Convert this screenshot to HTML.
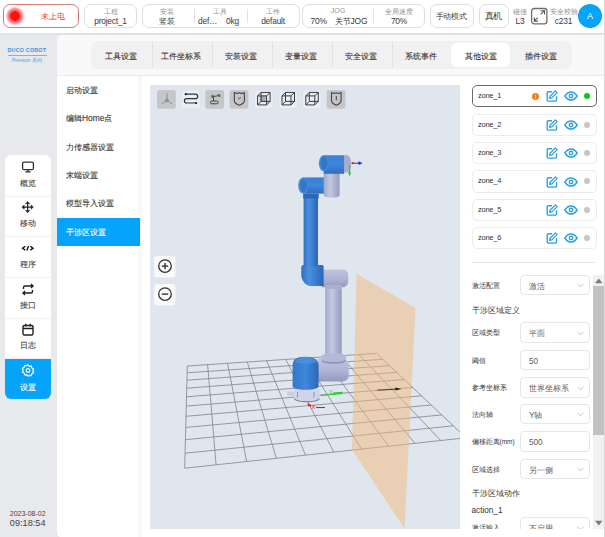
<!DOCTYPE html>
<html><head><meta charset="utf-8">
<style>
*{box-sizing:border-box;margin:0;padding:0}
html,body{width:605px;height:537px;overflow:hidden}
body{position:relative;background:#e8e9ec;font-family:"Liberation Sans",sans-serif;color:#333}
.a{position:absolute;white-space:nowrap}
.box{position:absolute;border:1px solid #dedede;border-radius:7px;background:#fff}
.lbl{position:absolute;font-size:7px;color:#939393;line-height:8px;white-space:nowrap;text-align:center}
.val{position:absolute;font-size:8.4px;letter-spacing:-.2px;color:#3a3a3a;line-height:9.5px;white-space:nowrap;text-align:center}
.sep{position:absolute;width:1px;background:#e2e2e2}
.ni{position:absolute;left:0;width:46px;height:40.7px;text-align:center}
.ni .ic{position:absolute;left:16px;top:5.5px}
.ni span{position:absolute;left:0;width:46px;top:23.7px;font-size:8.2px;line-height:10px;color:#444}
.ni.sel{background:#06a3fa}
.ni.sel span{color:#fff}
.nsep{position:absolute;left:0;width:46px;height:1px;background:#f0f0f0}
.tab{top:41px;width:60px;height:28px;line-height:30px;text-align:center;font-size:8.4px;color:#333}
.mi{left:66px;height:28px;line-height:29px;font-size:8.4px;color:#333}
.zt{left:16px;height:22.3px;line-height:22.4px;font-size:7.5px;letter-spacing:-.25px;color:#333}
.fl{left:9.5px;height:20.7px;line-height:22.5px;font-size:7.2px;color:#333}
.fh{left:9.5px;height:12px;line-height:12px;font-size:8.1px;color:#333}
.fv{left:67px;height:20.7px;line-height:23.5px;font-size:8.2px;color:#5c5c5c}

.tab,.mi,.ni span{-webkit-text-stroke:.1px currentColor}
</style></head><body>
<div class="a" style="left:0;top:0;width:605px;height:33px;background:#fff"></div>
<div class="a" style="left:0;top:33px;width:605px;height:3px;background:linear-gradient(#dddee2,#e8e9ec)"></div>
<div class="box" style="left:3px;top:4px;width:76px;height:24px;border-color:#d27a7a"></div>
<div class="a" style="left:4.3px;top:4.5px;width:22px;height:22px;border-radius:50%;background:radial-gradient(circle 11px at 50% 50%,#ff1212 0,#ff1212 40%,rgba(255,50,50,.85) 46%,rgba(255,85,85,.72) 62%,rgba(255,95,95,.6) 70%,rgba(255,140,140,.2) 80%,rgba(255,170,170,0) 95%)"></div>
<div class="a" style="left:41px;top:12px;font-size:8.2px;line-height:10px;color:#e03c3c">未上电</div>
<div class="box" style="left:84px;top:4px;width:53px;height:24px"></div>
<div class="lbl" style="left:84px;width:53px;top:7.5px">工程</div>
<div class="val" style="left:84px;width:53px;top:16.5px">project_1</div>
<div class="box" style="left:142px;top:4px;width:158px;height:24px"></div>
<div class="lbl" style="left:146px;width:42px;top:7.5px">安装</div>
<div class="val" style="left:146px;width:42px;top:16.5px">竖装</div>
<div class="sep" style="left:194px;top:9px;height:14px"></div>
<div class="lbl" style="left:199px;width:42px;top:7.5px">工具</div>
<div class="val" style="left:198px;top:16.5px;text-align:left">def…</div>
<div class="val" style="left:226px;top:16.5px;text-align:left">0kg</div>
<div class="sep" style="left:246.5px;top:9px;height:14px"></div>
<div class="lbl" style="left:252px;width:42px;top:7.5px">工件</div>
<div class="val" style="left:252px;width:42px;top:16.5px">default</div>
<div class="box" style="left:302px;top:4px;width:123px;height:24px"></div>
<div class="lbl" style="left:317px;width:42px;top:6.5px">JOG</div>
<div class="val" style="left:310.5px;top:16.5px;text-align:left">70%</div>
<div class="val" style="left:335px;top:16.5px;text-align:left">关节JOG</div>
<div class="sep" style="left:373px;top:9px;height:14px"></div>
<div class="lbl" style="left:378px;width:42px;top:7.5px">全局速度</div>
<div class="val" style="left:378px;width:42px;top:16.5px">70%</div>
<div class="box" style="left:429.5px;top:4px;width:44.5px;height:24px"></div>
<div class="val" style="left:429px;width:44.5px;top:12.2px;font-size:8.2px;line-height:10px">手动模式</div>
<div class="box" style="left:478.5px;top:4px;width:30px;height:24px"></div>
<div class="val" style="left:478.5px;width:30px;top:11.2px;font-size:9.2px;line-height:11px">真机</div>
<div class="lbl" style="left:510px;width:20px;top:7.5px">碰撞</div>
<div class="val" style="left:510px;width:20px;top:16.5px">L3</div>
<svg class="a" style="left:530px;top:7px" width="19" height="19" viewBox="0 0 19 19"><rect x="1.6" y="1.5" width="15.3" height="15.4" rx="2.6" fill="none" stroke="#6e6e6e" stroke-width="1.3"/><path d="M10.6 7.4L14.3 3.8M10.7 3.7h3.8v3.9M7.6 10.6L4.4 13.9M4.3 10.5v3.6H8" fill="none" stroke="#555" stroke-width="1.1"/></svg>
<div class="lbl" style="left:549.5px;top:7.5px;text-align:left">安全校验</div>
<div class="val" style="left:549.5px;width:28px;top:16.5px">c231</div>
<div class="a" style="left:578px;top:4px;width:24px;height:24px;border-radius:50%;background:#06a3fa;color:#fff;font-size:9px;line-height:24px;text-align:center">A</div>
<div class="a" style="left:7.5px;top:47.3px;font-size:5.3px;font-weight:bold;color:#3a93da;letter-spacing:.25px;line-height:6px">DUCO COBOT</div>
<div class="a" style="left:8px;top:55.3px;width:39px;height:1px;background:#7ab5e6"></div>
<div class="a" style="left:12px;top:57.8px;font-size:4.6px;color:#4a9de0;line-height:5px">Premium 系列</div>
<div class="a" style="left:5px;top:155px;width:46px;height:244px;background:#fff;border-radius:6px;overflow:hidden">
<div class="ni" style="top:0.0px"><svg class="ic" width="14" height="13" viewBox="0 0 14 13"><rect x="1.6" y="1.1" width="10.8" height="7.6" rx="1.5" fill="none" stroke="#333" stroke-width="1.3"/><path d="M7 8.8v2M4.4 10.9h5.2" stroke="#333" stroke-width="1.3"/></svg><span>概览</span></div>
<div class="nsep" style="top:40.7px"></div>
<div class="ni" style="top:40.7px"><svg class="ic" width="14" height="13" viewBox="0 0 14 13"><path d="M6.65 2V10.2M2.5 6.1H10.8" stroke="#222" stroke-width="1.2"/><path d="M6.65 0.4L4.5 2.8H8.8zM6.65 11.8L4.5 9.4H8.8zM0.9 6.1L3.2 4V8.2zM12.4 6.1L10.1 4V8.2z" fill="#222" stroke="#222" stroke-width=".5" stroke-linejoin="round"/></svg><span>移动</span></div>
<div class="nsep" style="top:81.3px"></div>
<div class="ni" style="top:81.3px"><svg class="ic" width="14" height="13" viewBox="0 0 14 13"><path d="M4.3 4.3L1.6 6.2 4.3 8.1M9.3 4.3L12 6.2 9.3 8.1M7.5 4.1L5.9 8.6" fill="none" stroke="#111" stroke-width="1.4"/></svg><span>程序</span></div>
<div class="nsep" style="top:122.0px"></div>
<div class="ni" style="top:122.0px"><svg class="ic" width="14" height="13" viewBox="0 0 14 13"><path d="M2.5 6V4.5a1.5 1.5 0 0 1 1.5-1.5h8M10 1l2 2-2 2M11.5 7v1.5A1.5 1.5 0 0 1 10 10H2M4 8l-2 2 2 2" fill="none" stroke="#222" stroke-width="1.4"/></svg><span>接口</span></div>
<div class="nsep" style="top:162.7px"></div>
<div class="ni" style="top:162.7px"><svg class="ic" width="14" height="13" viewBox="0 0 14 13"><rect x="2" y="2.5" width="10" height="9.5" rx="1.3" fill="none" stroke="#222" stroke-width="1.4"/><path d="M2 5.5h10M4.8 0.8v2.8M9.2 0.8v2.8" stroke="#222" stroke-width="1.4"/></svg><span>日志</span></div>
<div class="nsep" style="top:203.4px"></div>
<div class="ni sel" style="top:203.9px;height:41px"><svg class="ic" width="14" height="13" viewBox="0 0 14 13"><path d="M7 0.8l1.3 1.5 2-.3.5 1.9 1.8 1-.8 1.9.8 1.9-1.8 1-.5 1.9-2-.3L7 12.2l-1.3-1.5-2 .3-.5-1.9-1.8-1 .8-1.9-.8-1.9 1.8-1 .5-1.9 2 .3z" fill="none" stroke="#fff" stroke-width="1.2" stroke-linejoin="round"/><circle cx="7" cy="6.5" r="1.8" fill="none" stroke="#fff" stroke-width="1.2"/></svg><span>设置</span></div>
</div>
<div class="a" style="left:9.8px;top:510px;font-size:7px;line-height:8px;color:#444">2023-08-02</div>
<div class="a" style="left:9.8px;top:518px;font-size:9.2px;line-height:10px;color:#444">09:18:54</div>
<div class="a" style="left:57px;top:35px;width:548px;height:503px;background:#fff;border-radius:6px 0 0 6px"></div>
<div class="a" style="left:57px;top:35px;width:548px;height:40px;background:#f9f9f9;border-radius:6px 0 0 0"></div>
<div class="a" style="left:91px;top:41px;width:481px;height:28px;background:#f1f1f1;border-radius:7px"></div>
<div class="a tab" style="left:91px">工具设置</div>
<div class="a" style="left:152px;top:42px;width:1px;height:25px;background:#e2e2e2"></div>
<div class="a tab" style="left:151px">工件坐标系</div>
<div class="a" style="left:212px;top:42px;width:1px;height:25px;background:#e2e2e2"></div>
<div class="a tab" style="left:211px">安装设置</div>
<div class="a" style="left:272px;top:42px;width:1px;height:25px;background:#e2e2e2"></div>
<div class="a tab" style="left:271px">变量设置</div>
<div class="a" style="left:332px;top:42px;width:1px;height:25px;background:#e2e2e2"></div>
<div class="a tab" style="left:331px">安全设置</div>
<div class="a" style="left:392px;top:42px;width:1px;height:25px;background:#e2e2e2"></div>
<div class="a tab" style="left:391px">系统事件</div>
<div class="a" style="left:451px;top:43px;width:59px;height:24px;background:#fff;border-radius:6px"></div>
<div class="a tab" style="left:451px">其他设置</div>
<div class="a tab" style="left:511px">插件设置</div>
<div class="a" style="left:57px;top:75px;width:548px;height:1px;background:#ebebeb"></div>
<div class="a" style="left:137px;top:76px;width:6px;height:461px;background:linear-gradient(to right,rgba(0,0,0,0),rgba(0,0,0,.045) 50%,rgba(0,0,0,0))"></div>
<div class="a mi" style="top:76.0px">启动设置</div>
<div class="a mi" style="top:104.3px">编辑Home点</div>
<div class="a mi" style="top:132.7px">力传感器设置</div>
<div class="a mi" style="top:161.1px">末端设置</div>
<div class="a mi" style="top:189.4px">模型导入设置</div>
<div class="a" style="left:57px;top:218px;width:83px;height:28px;background:#06a3fa"></div>
<div class="a mi" style="top:217.8px;color:#fff">干涉区设置</div>
<div class="a" style="left:150px;top:85px;width:309.5px;height:443.5px;background:#dfe6ee;overflow:hidden">
<svg class="a" style="left:0;top:0" width="310" height="444" viewBox="0 0 310 444">
<defs>
<linearGradient id="gb" x1="0" x2="1" y1="0" y2="0"><stop offset="0" stop-color="#2f6fc0"/><stop offset=".35" stop-color="#4a8fe0"/><stop offset="1" stop-color="#2a66b5"/></linearGradient>
<linearGradient id="gg" x1="0" x2="1" y1="0" y2="0"><stop offset="0" stop-color="#a2a8c8"/><stop offset=".4" stop-color="#c3c8e2"/><stop offset="1" stop-color="#959bbd"/></linearGradient>
<linearGradient id="gbh" x1="0" x2="0" y1="0" y2="1"><stop offset="0" stop-color="#3b80d4"/><stop offset=".5" stop-color="#3d86da"/><stop offset="1" stop-color="#2f6dbf"/></linearGradient>
<linearGradient id="gb2" x1="0" x2="1" y1="0" y2="0"><stop offset="0" stop-color="#3577c8"/><stop offset=".5" stop-color="#3e87da"/><stop offset="1" stop-color="#2d67b5"/></linearGradient>
<linearGradient id="gg2" x1="0" x2="0" y1="0" y2="1"><stop offset="0" stop-color="#bfc3df"/><stop offset=".55" stop-color="#afb4d4"/><stop offset="1" stop-color="#959abb"/></linearGradient>
</defs>
<g transform="translate(-150,-85)">
<path d="M187.3 365.6L184.7 467.8M187.3 365.6L376.5 353.0M207.6 364.2L216.1 464.4M187.1 372.4L382.7 358.9M227.6 362.9L246.6 461.1M186.9 379.8L389.4 365.2M247.3 361.6L276.4 457.9M186.7 387.8L396.5 371.9M266.6 360.3L305.5 454.7M186.5 396.4L404.2 379.1M285.7 359.0L333.9 451.7M186.3 405.7L412.5 387.0M304.4 357.8L361.6 448.7M186.0 415.9L421.5 395.4M322.9 356.6L388.6 445.8M185.7 427.0L431.2 404.6M341.0 355.4L415.0 442.9M185.4 439.3L441.8 414.5M358.9 354.2L440.8 440.1M185.1 452.8L453.3 425.4M376.5 353.0L466.0 437.4M184.7 467.8L466.0 437.4" stroke="#7e858d" stroke-width=".8" fill="none" transform="translate(0,.4)"/>
<path d="M356.6 274L415.5 308L404.5 528.5L352 449.6Z" fill="#f3b87a" fill-opacity=".5"/>
<path d="M377.4 390.2L396.5 389.2" stroke="#3a2e26" stroke-width=".9"/><path d="M395.3 387.6L401.6 389 395.5 390.6z" fill="#2a1e16"/>
</g>
<g transform="translate(-150,-85)">

<!-- grid over plane drawn again faint -->
<!-- black arrow on grid -->

<!-- base flange -->
<path d="M287.2 391.4h7v4.5h-7z" fill="#c9cee2"/>
<path d="M294 389h25.7v8.5c0 2.4-5.8 3.6-12.85 3.6S294 399.9 294 397.5z" fill="#cfd4e8"/>
<path d="M294 398c1.5 2 6 3.1 12.85 3.1s11.35-1.1 12.85-3.1v1.2c-1.5 2-6 3-12.85 3S295.5 401.2 294 399.2z" fill="#7f86a0"/>
<path d="M297.5 392v5.5M314 392v5.5" stroke="#8f96b4" stroke-width="1"/>
<!-- shoulder grey -->
<path d="M318 358.5h23.5c4 0 7.3 3 7.3 7v9.8c0 3.6-3 6.2-6.8 6.2H318z" fill="url(#gg2)"/>
<!-- forearm tube -->
<rect x="325.2" y="287" width="16.5" height="69" fill="url(#gg)"/>
<path d="M321.6 356.5c0-2.2 5-3.6 12.2-3.6s12.2 1.4 12.2 3.6v3.5c0 2-5 3.2-12.2 3.2s-12.2-1.2-12.2-3.2z" fill="#b4b9d8"/>
<path d="M321.6 358.8c0 2 5 3.4 12.2 3.4s12.2-1.4 12.2-3.4v1.6c0 2-5 3.3-12.2 3.3s-12.2-1.3-12.2-3.3z" fill="#8f95b6"/>
<!-- base blue -->
<path d="M292.6 366.5c0-6.5 2.5-9.8 12.5-9.8s13.5 3.3 13.5 9.8v19.5c0 2.5-5.5 3.8-13 3.8s-13-1.3-13-3.8z" fill="url(#gb2)"/>
<path d="M295 362c2-3.5 5.5-4.8 10.5-4.8s9.5 1.3 11.5 4.8c-3 1.2-6.5 1.8-11 1.8s-8-.6-11-1.8z" fill="#4c92dc" opacity=".8"/>
<!-- elbow grey -->
<path d="M322 269.4h20.5c3.2 0 5.7 2.5 5.7 5.7v6.4c0 3.2-2.5 5.7-5.7 5.7H322z" fill="url(#gg2)"/>
<rect x="325.5" y="285" width="16" height="4" fill="#a9b0d2"/>
<!-- elbow blue -->
<path d="M303.3 264.9H322a1.6 1.6 0 0 1 1.6 1.6V286.1H312.3a11 11 0 0 1-11-11V266.9a2 2 0 0 1 2-2z" fill="url(#gb)"/>
<!-- upper arm -->
<rect x="303.6" y="196" width="14.4" height="70" fill="url(#gb)"/>
<rect x="303.2" y="193.5" width="15.5" height="5" fill="#2d68b8"/>
<!-- upper joint blue -->
<path d="M303 177.4h21.1v16.2H303z" fill="url(#gbh)"/>
<ellipse cx="303" cy="185.5" rx="4.8" ry="8.1" fill="#4a8fdc"/>
<ellipse cx="303.5" cy="185.5" rx="3.6" ry="6.8" fill="#3477c6"/>
<!-- wrist2 grey -->
<path d="M323.7 172.5h15.9v22.5c0 1.8-3.5 2.6-7.9 2.6s-8-.8-8-2.6z" fill="url(#gg)"/>
<!-- wrist3 blue -->
<path d="M323.5 155.3h21.2v16.2h-.5v2.3h-20.5v-2.3h-.2z" fill="url(#gbh)"/>
<ellipse cx="323.6" cy="163.3" rx="4.8" ry="8" fill="#4a8fdc"/>
<ellipse cx="324.1" cy="163.3" rx="3.6" ry="6.7" fill="#3477c6"/>
<path d="M344.2 155.3h3c2.3 0 3.9 3.5 3.9 8.5s-1.6 8.7-3.9 8.7h-3z" fill="#a9adc8"/>
<!-- tool axes -->
<path d="M352.5 163.2h7" stroke="#2233cc" stroke-width="1"/><path d="M358.5 161.3l4 1.9-4 1.9z" fill="#1a2acc"/>
<circle cx="352.6" cy="163.2" r="1.1" fill="#e02020"/>
<path d="M349.6 165.5v8" stroke="#22cc33" stroke-width="1.2"/><path d="M348 172.5l1.6 4 1.6-4z" fill="#22cc33"/>
<!-- base axes -->
<path d="M320.5 395.5L343 393.5" stroke="#22d030" stroke-width="1"/>
<text x="329" y="393.6" font-size="5.5" fill="#1fc42a" font-family="Liberation Sans">Y</text>
<path d="M333 393.2l9.5-.8" stroke="#22d030" stroke-width="1.4"/>
<path d="M307.3 403.2l3.2 1.2-2 2.2z" fill="#e01818"/>
<path d="M309 404.5l2 2" stroke="#e01818" stroke-width="1.2"/>
<text x="311.5" y="408.6" font-size="5.8" fill="#e01818" font-family="Liberation Sans">X</text>
<path d="M316 407.5h9" stroke="#e01818" stroke-width="1.1"/>
</g>
<g transform="translate(-150,-85)">
<rect x="157.0" y="90.1" width="18.8" height="18.7" rx="2.2" fill="#c5c6c8"/>
<rect x="181.3" y="90.1" width="18.8" height="18.7" rx="2.2" fill="#e9eef4" stroke="#d5dbe2" stroke-width=".6"/>
<rect x="205.3" y="90.1" width="18.8" height="18.7" rx="2.2" fill="#c5c6c8"/>
<rect x="229.6" y="90.1" width="18.8" height="18.7" rx="2.2" fill="#c5c6c8"/>
<rect x="254.3" y="90.1" width="18.8" height="18.7" rx="2.2" fill="#e9eef4" stroke="#d5dbe2" stroke-width=".6"/>
<rect x="278.7" y="90.1" width="18.8" height="18.7" rx="2.2" fill="#e9eef4" stroke="#d5dbe2" stroke-width=".6"/>
<rect x="302.5" y="90.1" width="18.8" height="18.7" rx="2.2" fill="#e9eef4" stroke="#d5dbe2" stroke-width=".6"/>
<rect x="326.7" y="90.1" width="18.8" height="18.7" rx="2.2" fill="#c5c6c8"/>
<path d="M167 100.4V95M167 100.4L161.6 103.8M167 100.4L172.2 103.8" stroke="#6a6a6a" stroke-width=".6" fill="none"/><circle cx="167" cy="100.4" r="1.5" fill="none" stroke="#777" stroke-width=".6"/><path d="M166.6 93.5h.8v1h-.8z" fill="#555"/>
<path d="M185.7 94.2H195.5a2.2 2.2 0 0 1 0 4.4H186.6a2.2 2.2 0 0 0 0 4.4H196.2" fill="none" stroke="#333" stroke-width="1.2"/><circle cx="185.7" cy="94.2" r="1.1" fill="#222"/><circle cx="196.2" cy="103" r="1.1" fill="#222"/>
<rect x="210.4" y="101" width="7.8" height="2.8" rx="1.4" fill="none" stroke="#444" stroke-width="1"/><path d="M213.5 101V97.6L212.3 96.2M213.3 96.6L219 95.5M218.2 94.3l2 .9M218.6 96.4l2-.3" fill="none" stroke="#444" stroke-width="1"/><circle cx="212.6" cy="96.4" r="1.1" fill="none" stroke="#444" stroke-width=".9"/>
<path d="M234.3 92.5L236.8 93.6 239.3 92.8 241.9 93.6 244.4 92.5V100.2C244.4 102.5 242 104.3 239.3 105.2 236.6 104.3 234.3 102.5 234.3 100.2Z" fill="none" stroke="#444" stroke-width="1.1" stroke-linejoin="round"/><path d="M237.8 97.6l1.5 1.2 1.6-1.2" fill="none" stroke="#444" stroke-width=".9"/>
<rect x="259.8" y="95.6" width="6" height="6" fill="#a8acb0"/><path d="M257.6 95.9h9v9h-9z M261.1 92.4h9v9h-9z M257.6 95.9l3.5-3.5 M266.6 95.9l3.5-3.5 M266.6 104.9l3.5-3.5 M257.6 104.9l3.5-3.5" fill="none" stroke="#3a3a3a" stroke-width="1"/>
<path d="M282.0 95.9h9v9h-9z M285.5 92.4h9v9h-9z M282.0 95.9l3.5-3.5 M291.0 95.9l3.5-3.5 M291.0 104.9l3.5-3.5 M282.0 104.9l3.5-3.5" fill="none" stroke="#3a3a3a" stroke-width="1"/>
<path d="M305.8 95.9h9v9h-9z M309.3 92.4h9v9h-9z M305.8 95.9l3.5-3.5 M314.8 95.9l3.5-3.5 M314.8 104.9l3.5-3.5 M305.8 104.9l3.5-3.5" fill="none" stroke="#3a3a3a" stroke-width="1"/>
<path d="M331.5 92.5L334 93.6 336.3 92.8 338.6 93.6 341.1 92.5V100.2C341.1 102.5 338.8 104.3 336.3 105.2 333.8 104.3 331.5 102.5 331.5 100.2Z" fill="none" stroke="#444" stroke-width="1.1" stroke-linejoin="round"/><path d="M336.3 96v4.3" stroke="#444" stroke-width="1"/>
<rect x="154.1" y="256.1" width="21.3" height="21.3" rx="3" fill="#f7f9fb"/><circle cx="165" cy="266.1" r="6.3" fill="none" stroke="#333" stroke-width="1.3"/><path d="M161.8 266.1h6.4" stroke="#333" stroke-width="1.4"/><path d="M165 262.9v6.4" stroke="#333" stroke-width="1.4"/>
<rect x="154.1" y="284.1" width="21.3" height="21.3" rx="3" fill="#f7f9fb"/><circle cx="165" cy="294.1" r="6.3" fill="none" stroke="#333" stroke-width="1.3"/><path d="M161.8 294.1h6.4" stroke="#333" stroke-width="1.4"/>
</g>
</svg>
</div>
<div class="a" style="left:462px;top:76px;width:143px;height:452.5px;overflow:hidden">
<div class="a" style="left:9.5px;top:9.2px;width:125.5px;height:22.3px;border:1px solid #6a6a6a;border-radius:5px"></div>
<div class="a zt" style="top:9.2px">zone_1</div>
<div class="a" style="left:69.9px;top:16.8px;width:7.2px;height:7.2px;border-radius:50%;background:#ec8214"></div>
<div class="a" style="left:72.9px;top:17.9px;width:1.4px;height:5px;background:#ffb868;border-radius:.5px"></div>
<svg class="a" style="left:84px;top:14.4px" width="12" height="12" viewBox="0 0 12 12"><path d="M6 1.8H2.2a1 1 0 0 0-1 1v7.3a1 1 0 0 0 1 1h7.3a1 1 0 0 0 1-1V6.3" fill="none" stroke="#2f9fe6" stroke-width="1.4"/><path d="M9.4 0.9l1.7 1.7-5.3 5.3-2.2.5.5-2.2z" fill="none" stroke="#2f9fe6" stroke-width="1.3" stroke-linejoin="round"/></svg>
<svg class="a" style="left:102px;top:15.4px" width="14" height="10" viewBox="0 0 14 10"><path d="M0.9 5C2.8 2 4.8 0.9 7 0.9S11.2 2 13.1 5C11.2 8 9.2 9.1 7 9.1S2.8 8 0.9 5z" fill="none" stroke="#2f9fe6" stroke-width="1.5"/><circle cx="7" cy="5" r="1.7" fill="none" stroke="#2f9fe6" stroke-width="1.4"/></svg>
<div class="a" style="left:120.6px;top:16.2px;width:8px;height:8px;border-radius:50%;background:radial-gradient(circle 4px at 50% 50%,#12c412 0,#12c412 58%,#12c41200 95%)"></div>
<div class="a" style="left:9.5px;top:37.6px;width:125.5px;height:22.3px;border:1px solid #ececec;border-radius:5px"></div>
<div class="a zt" style="top:37.6px">zone_2</div>
<svg class="a" style="left:84px;top:42.8px" width="12" height="12" viewBox="0 0 12 12"><path d="M6 1.8H2.2a1 1 0 0 0-1 1v7.3a1 1 0 0 0 1 1h7.3a1 1 0 0 0 1-1V6.3" fill="none" stroke="#2f9fe6" stroke-width="1.4"/><path d="M9.4 0.9l1.7 1.7-5.3 5.3-2.2.5.5-2.2z" fill="none" stroke="#2f9fe6" stroke-width="1.3" stroke-linejoin="round"/></svg>
<svg class="a" style="left:102px;top:43.8px" width="14" height="10" viewBox="0 0 14 10"><path d="M0.9 5C2.8 2 4.8 0.9 7 0.9S11.2 2 13.1 5C11.2 8 9.2 9.1 7 9.1S2.8 8 0.9 5z" fill="none" stroke="#2f9fe6" stroke-width="1.5"/><circle cx="7" cy="5" r="1.7" fill="none" stroke="#2f9fe6" stroke-width="1.4"/></svg>
<div class="a" style="left:120.6px;top:44.6px;width:8px;height:8px;border-radius:50%;background:radial-gradient(circle 4px at 50% 50%,#c4c4c4 0,#c4c4c4 58%,#c4c4c400 95%)"></div>
<div class="a" style="left:9.5px;top:66.0px;width:125.5px;height:22.3px;border:1px solid #ececec;border-radius:5px"></div>
<div class="a zt" style="top:66.0px">zone_3</div>
<svg class="a" style="left:84px;top:71.2px" width="12" height="12" viewBox="0 0 12 12"><path d="M6 1.8H2.2a1 1 0 0 0-1 1v7.3a1 1 0 0 0 1 1h7.3a1 1 0 0 0 1-1V6.3" fill="none" stroke="#2f9fe6" stroke-width="1.4"/><path d="M9.4 0.9l1.7 1.7-5.3 5.3-2.2.5.5-2.2z" fill="none" stroke="#2f9fe6" stroke-width="1.3" stroke-linejoin="round"/></svg>
<svg class="a" style="left:102px;top:72.2px" width="14" height="10" viewBox="0 0 14 10"><path d="M0.9 5C2.8 2 4.8 0.9 7 0.9S11.2 2 13.1 5C11.2 8 9.2 9.1 7 9.1S2.8 8 0.9 5z" fill="none" stroke="#2f9fe6" stroke-width="1.5"/><circle cx="7" cy="5" r="1.7" fill="none" stroke="#2f9fe6" stroke-width="1.4"/></svg>
<div class="a" style="left:120.6px;top:73.0px;width:8px;height:8px;border-radius:50%;background:radial-gradient(circle 4px at 50% 50%,#c4c4c4 0,#c4c4c4 58%,#c4c4c400 95%)"></div>
<div class="a" style="left:9.5px;top:94.4px;width:125.5px;height:22.3px;border:1px solid #ececec;border-radius:5px"></div>
<div class="a zt" style="top:94.4px">zone_4</div>
<svg class="a" style="left:84px;top:99.6px" width="12" height="12" viewBox="0 0 12 12"><path d="M6 1.8H2.2a1 1 0 0 0-1 1v7.3a1 1 0 0 0 1 1h7.3a1 1 0 0 0 1-1V6.3" fill="none" stroke="#2f9fe6" stroke-width="1.4"/><path d="M9.4 0.9l1.7 1.7-5.3 5.3-2.2.5.5-2.2z" fill="none" stroke="#2f9fe6" stroke-width="1.3" stroke-linejoin="round"/></svg>
<svg class="a" style="left:102px;top:100.6px" width="14" height="10" viewBox="0 0 14 10"><path d="M0.9 5C2.8 2 4.8 0.9 7 0.9S11.2 2 13.1 5C11.2 8 9.2 9.1 7 9.1S2.8 8 0.9 5z" fill="none" stroke="#2f9fe6" stroke-width="1.5"/><circle cx="7" cy="5" r="1.7" fill="none" stroke="#2f9fe6" stroke-width="1.4"/></svg>
<div class="a" style="left:120.6px;top:101.4px;width:8px;height:8px;border-radius:50%;background:radial-gradient(circle 4px at 50% 50%,#c4c4c4 0,#c4c4c4 58%,#c4c4c400 95%)"></div>
<div class="a" style="left:9.5px;top:122.8px;width:125.5px;height:22.3px;border:1px solid #ececec;border-radius:5px"></div>
<div class="a zt" style="top:122.8px">zone_5</div>
<svg class="a" style="left:84px;top:128.0px" width="12" height="12" viewBox="0 0 12 12"><path d="M6 1.8H2.2a1 1 0 0 0-1 1v7.3a1 1 0 0 0 1 1h7.3a1 1 0 0 0 1-1V6.3" fill="none" stroke="#2f9fe6" stroke-width="1.4"/><path d="M9.4 0.9l1.7 1.7-5.3 5.3-2.2.5.5-2.2z" fill="none" stroke="#2f9fe6" stroke-width="1.3" stroke-linejoin="round"/></svg>
<svg class="a" style="left:102px;top:129.0px" width="14" height="10" viewBox="0 0 14 10"><path d="M0.9 5C2.8 2 4.8 0.9 7 0.9S11.2 2 13.1 5C11.2 8 9.2 9.1 7 9.1S2.8 8 0.9 5z" fill="none" stroke="#2f9fe6" stroke-width="1.5"/><circle cx="7" cy="5" r="1.7" fill="none" stroke="#2f9fe6" stroke-width="1.4"/></svg>
<div class="a" style="left:120.6px;top:129.8px;width:8px;height:8px;border-radius:50%;background:radial-gradient(circle 4px at 50% 50%,#c4c4c4 0,#c4c4c4 58%,#c4c4c400 95%)"></div>
<div class="a" style="left:9.5px;top:151.2px;width:125.5px;height:22.3px;border:1px solid #ececec;border-radius:5px"></div>
<div class="a zt" style="top:151.2px">zone_6</div>
<svg class="a" style="left:84px;top:156.4px" width="12" height="12" viewBox="0 0 12 12"><path d="M6 1.8H2.2a1 1 0 0 0-1 1v7.3a1 1 0 0 0 1 1h7.3a1 1 0 0 0 1-1V6.3" fill="none" stroke="#2f9fe6" stroke-width="1.4"/><path d="M9.4 0.9l1.7 1.7-5.3 5.3-2.2.5.5-2.2z" fill="none" stroke="#2f9fe6" stroke-width="1.3" stroke-linejoin="round"/></svg>
<svg class="a" style="left:102px;top:157.4px" width="14" height="10" viewBox="0 0 14 10"><path d="M0.9 5C2.8 2 4.8 0.9 7 0.9S11.2 2 13.1 5C11.2 8 9.2 9.1 7 9.1S2.8 8 0.9 5z" fill="none" stroke="#2f9fe6" stroke-width="1.5"/><circle cx="7" cy="5" r="1.7" fill="none" stroke="#2f9fe6" stroke-width="1.4"/></svg>
<div class="a" style="left:120.6px;top:158.2px;width:8px;height:8px;border-radius:50%;background:radial-gradient(circle 4px at 50% 50%,#c4c4c4 0,#c4c4c4 58%,#c4c4c400 95%)"></div>
<div class="a" style="left:9.5px;top:186px;width:124px;height:1px;background:#e8e8e8"></div>
<div class="a fl" style="top:198.5px;font-size:7px">激活配置</div>
<div class="a" style="left:57.5px;top:198.5px;width:70.5px;height:20.7px;border:1px solid #e6e6e6;border-radius:4px"></div>
<div class="a fv" style="top:198.5px">激活</div>
<svg class="a" style="left:115px;top:207.0px" width="7" height="5" viewBox="0 0 7 5"><path d="M0.5 0.8L3.5 3.8 6.5 0.8" fill="none" stroke="#b8b8b8" stroke-width="0.9"/></svg>
<div class="a fl" style="top:246.0px;font-size:7px">区域类型</div>
<div class="a" style="left:57.5px;top:246.0px;width:70.5px;height:20.7px;border:1px solid #e6e6e6;border-radius:4px"></div>
<div class="a fv" style="top:246.0px">平面</div>
<svg class="a" style="left:115px;top:254.5px" width="7" height="5" viewBox="0 0 7 5"><path d="M0.5 0.8L3.5 3.8 6.5 0.8" fill="none" stroke="#b8b8b8" stroke-width="0.9"/></svg>
<div class="a fl" style="top:273.5px;font-size:7px">阈值</div>
<div class="a" style="left:57.5px;top:273.5px;width:70.5px;height:20.7px;border:1px solid #e6e6e6;border-radius:4px"></div>
<div class="a fv" style="top:273.5px">50</div>
<div class="a fl" style="top:301.0px;font-size:7px">参考坐标系</div>
<div class="a" style="left:57.5px;top:301.0px;width:70.5px;height:20.7px;border:1px solid #e6e6e6;border-radius:4px"></div>
<div class="a fv" style="top:301.0px">世界坐标系</div>
<svg class="a" style="left:115px;top:309.5px" width="7" height="5" viewBox="0 0 7 5"><path d="M0.5 0.8L3.5 3.8 6.5 0.8" fill="none" stroke="#b8b8b8" stroke-width="0.9"/></svg>
<div class="a fl" style="top:327.5px;font-size:7px">法向轴</div>
<div class="a" style="left:57.5px;top:327.5px;width:70.5px;height:20.7px;border:1px solid #e6e6e6;border-radius:4px"></div>
<div class="a fv" style="top:327.5px">Y轴</div>
<svg class="a" style="left:115px;top:336.0px" width="7" height="5" viewBox="0 0 7 5"><path d="M0.5 0.8L3.5 3.8 6.5 0.8" fill="none" stroke="#b8b8b8" stroke-width="0.9"/></svg>
<div class="a fl" style="top:355.0px;font-size:6.5px">偏移距离(mm)</div>
<div class="a" style="left:57.5px;top:355.0px;width:70.5px;height:20.7px;border:1px solid #e6e6e6;border-radius:4px"></div>
<div class="a fv" style="top:355.0px">500</div>
<div class="a fl" style="top:382.5px;font-size:7px">区域选择</div>
<div class="a" style="left:57.5px;top:382.5px;width:70.5px;height:20.7px;border:1px solid #e6e6e6;border-radius:4px"></div>
<div class="a fv" style="top:382.5px">另一侧</div>
<svg class="a" style="left:115px;top:391.0px" width="7" height="5" viewBox="0 0 7 5"><path d="M0.5 0.8L3.5 3.8 6.5 0.8" fill="none" stroke="#b8b8b8" stroke-width="0.9"/></svg>
<div class="a fl" style="top:441.0px;font-size:7px">激活输入</div>
<div class="a" style="left:57.5px;top:441.0px;width:70.5px;height:20.7px;border:1px solid #e6e6e6;border-radius:4px"></div>
<div class="a fv" style="top:441.0px">不启用</div>
<svg class="a" style="left:115px;top:449.5px" width="7" height="5" viewBox="0 0 7 5"><path d="M0.5 0.8L3.5 3.8 6.5 0.8" fill="none" stroke="#b8b8b8" stroke-width="0.9"/></svg>
<div class="a fh" style="top:228.5px">干涉区域定义</div>
<div class="a fh" style="top:412.0px">干涉区域动作</div>
<div class="a fh" style="top:429.0px;font-size:8.2px">action_1</div>
<div class="a" style="left:131px;top:198.5px;width:11.3px;height:254px;background:#f1f1f1"></div>
<div class="a" style="left:131px;top:210px;width:11.5px;height:149px;background:#c1c1c1"></div>
<svg class="a" style="left:131px;top:198.5px" width="12" height="12" viewBox="0 0 12 12"><path d="M2 8.3L5.75 3.5 9.5 8.3z" fill="#7c7c7c"/></svg>
<svg class="a" style="left:131px;top:441px" width="12" height="12" viewBox="0 0 12 12"><path d="M2 3.7L5.75 8.5 9.5 3.7z" fill="#7c7c7c"/></svg>
</div>
<div class="a" style="left:604px;top:0;width:1px;height:537px;background:#dadada"></div>
</body></html>
